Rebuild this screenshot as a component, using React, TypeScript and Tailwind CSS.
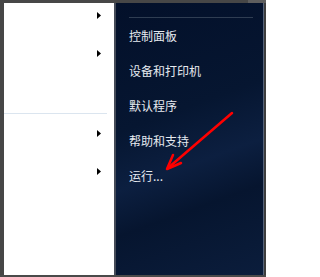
const RIGHT_ITEMS = ["控制面板", "设备和打印机", "默认程序", "帮助和支持", "运行..."];

function SubArrow() {
  return (
    <svg width="4" height="7" viewBox="0 0 4 7" className="block">
      <polygon points="0,0 4,3.5 0,7" fill="#000" />
    </svg>
  );
}

function ArrowRow() {
  return (
    <div className="flex h-[24px] items-center justify-end pr-[13px]">
      <SubArrow />
    </div>
  );
}

export default function App() {
  return (
    <div className="relative flex h-[277px] w-[266px] flex-col overflow-hidden bg-[#464646] font-['Noto_Sans_CJK_SC','Noto_Sans',sans-serif]">
      {/* top strip */}
      <div className="flex h-[3px] shrink-0">
        <div className="flex-1 bg-[#474747]" />
        <div className="w-[18px] bg-[#5e5e5e]" />
      </div>

      <div className="flex flex-1 pl-[4px]">
        {/* left white column */}
        <div className="flex w-[110px] flex-col bg-white">
          <ArrowRow />
          <div className="mt-[14px]">
            <ArrowRow />
          </div>
          <div className="mt-[48px] h-px w-[103px] bg-[#dbe5ef]" />
          <div className="mt-[7px]">
            <ArrowRow />
          </div>
          <div className="mt-[14px]">
            <ArrowRow />
          </div>
        </div>

        <div className="w-[2px] bg-[#454b58]" />

        {/* dark right column */}
        <div className="flex flex-1 flex-col bg-[linear-gradient(160deg,#03102a_0%,#061631_40%,#0c1f40_58%,#06152f_72%,#0b1d3c_100%)] pl-[13px]">
          <div className="mt-[14px] h-px w-[124px] bg-[#2f3d52]" />
          {RIGHT_ITEMS.map((label) => (
            <div key={label} className="flex h-[35px] items-center text-[12px] leading-none text-[#e6eaf0]">
              {label}
            </div>
          ))}
        </div>

        <div className="flex w-[3px]">
          <div className="w-px bg-[#55637a]" />
          <div className="flex-1 bg-[#3e3e3e]" />
        </div>
      </div>

      <div className="h-[2px] shrink-0 bg-[#4a4a4a]" />

      {/* red annotation arrow */}
      <svg className="pointer-events-none absolute inset-0" width="266" height="277" viewBox="0 0 266 277">
        <g stroke="#ff0000" strokeWidth="2.5" strokeLinecap="round" strokeLinejoin="round" fill="none">
          <line x1="232" y1="113" x2="168" y2="168" />
          <polyline points="173,155 167,169 181,163" />
        </g>
      </svg>
    </div>
  );
}
